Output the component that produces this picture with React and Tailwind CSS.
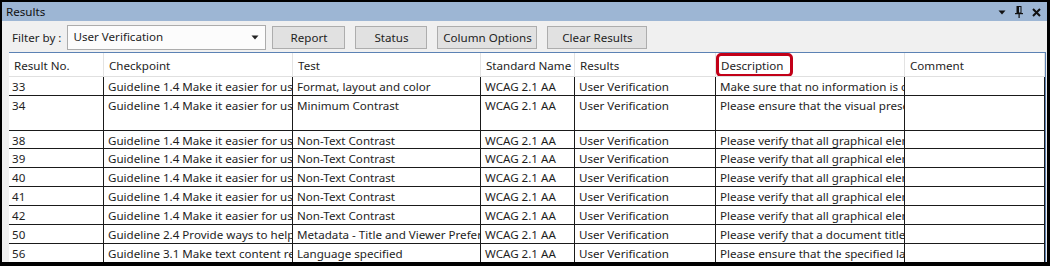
import React from "react";

const rows = [
  { n: "33", c: "Guideline 1.4 Make it easier for users to see and hear content", t: "Format, layout and color", d: "Make sure that no information is conveyed", h: "h-[19px]" },
  { n: "34", c: "Guideline 1.4 Make it easier for users to see and hear content", t: "Minimum Contrast", d: "Please ensure that the visual presentation", h: "h-[35px]" },
  { n: "38", c: "Guideline 1.4 Make it easier for users to see and hear content", t: "Non-Text Contrast", d: "Please verify that all graphical elements", h: "h-[18px]" },
  { n: "39", c: "Guideline 1.4 Make it easier for users to see and hear content", t: "Non-Text Contrast", d: "Please verify that all graphical elements", h: "h-[19px]" },
  { n: "40", c: "Guideline 1.4 Make it easier for users to see and hear content", t: "Non-Text Contrast", d: "Please verify that all graphical elements", h: "h-[19px]" },
  { n: "41", c: "Guideline 1.4 Make it easier for users to see and hear content", t: "Non-Text Contrast", d: "Please verify that all graphical elements", h: "h-[19px]" },
  { n: "42", c: "Guideline 1.4 Make it easier for users to see and hear content", t: "Non-Text Contrast", d: "Please verify that all graphical elements", h: "h-[19px]" },
  { n: "50", c: "Guideline 2.4 Provide ways to help users navigate", t: "Metadata - Title and Viewer Preferences", d: "Please verify that a document title is", h: "h-[19px]" },
  { n: "56", c: "Guideline 3.1 Make text content readable", t: "Language specified", d: "Please ensure that the specified language", h: "h-[19px]" },
];

const cols = "grid-cols-[95px_189px_188px_94px_141px_189px_140px]";

function Cell({ children, first }) {
  return (
    <div className={`border-r border-b border-[#1a1a1a] overflow-hidden whitespace-nowrap leading-[17px] pt-[1px] ${first ? "pl-[3px]" : "pl-[4px]"}`}>
      {children}
    </div>
  );
}

function HCell({ children, highlight }) {
  return (
    <div className="relative flex items-center border-r border-[#e3e3e3] overflow-hidden whitespace-nowrap pl-[5px] pt-[3px]">
      {children}
      {highlight && (
        <div className="absolute left-0 top-0 w-[77px] h-[24px] border-[3px] border-[#c20018] rounded-[5px]" />
      )}
    </div>
  );
}

function Btn({ w, children }) {
  return (
    <div className={`${w} h-[23px] flex items-center justify-center border border-[#adadad] bg-[#e1e1e1] text-[#1e1e1e]`}>
      {children}
    </div>
  );
}

export default function App() {
  return (
    <div
      className="w-[1050px] h-[266px] bg-black pt-[2px] pl-[2px] pr-[3px] pb-[4px] overflow-hidden text-[11.6px] text-[#1e1e1e]"
      style={{ fontFamily: "'Segoe UI','Noto Sans',sans-serif" }}
    >
      <div className="h-full bg-[#f0f0f0] flex flex-col">
        <div className="h-[19px] bg-[#9db6d4] flex items-center justify-between pl-[4px] pr-[6px] pt-[1px] shrink-0">
          <span className="text-[#111]">Results</span>
          <div className="flex items-center gap-[9px]">
            <svg width="8" height="6" viewBox="0 0 8 6"><polygon points="0.5,1.5 7.5,1.5 4,5.5" fill="#111" /></svg>
            <svg width="8" height="12" viewBox="0 0 8 12">
              <rect x="2" y="0.5" width="4" height="6.5" fill="none" stroke="#111" strokeWidth="1" />
              <rect x="2" y="0.5" width="2" height="6.5" fill="#111" />
              <rect x="0" y="7" width="8" height="1.2" fill="#111" />
              <rect x="3.5" y="8" width="1.2" height="4" fill="#111" />
            </svg>
            <svg width="9" height="9" viewBox="0 0 9 9"><path d="M1 1 L8 8 M8 1 L1 8" stroke="#111" strokeWidth="2" /></svg>
          </div>
        </div>
        <div className="h-[31px] flex items-center pl-[10px] pt-[2px] shrink-0">
          <span className="mr-[6px]">Filter by :</span>
          <div className="w-[199px] h-[25px] border border-[#acacac] bg-[#fcfcfc] flex items-center justify-between pl-[5px] pr-[6px] -mt-[1px]">
            <span>User Verification</span>
            <svg width="8" height="5" viewBox="0 0 8 5"><polygon points="0.5,0.5 7.5,0.5 4,4.5" fill="#222" /></svg>
          </div>
          <div className="flex items-center ml-[6px] gap-[9px]">
            <Btn w="w-[73px]">Report</Btn>
            <div className="ml-[1px]"><Btn w="w-[72px]">Status</Btn></div>
            <div className="ml-[1px]"><Btn w="w-[100px]">Column Options</Btn></div>
            <div className="ml-[1px]"><Btn w="w-[100px]">Clear Results</Btn></div>
          </div>
        </div>
        <div className="flex-1 pl-[7px] overflow-hidden">
          <div className="w-[1037px] bg-white border-t border-r border-[#5c82b4] h-full">
            <div className={`grid ${cols} h-[24px] border-b border-[#e0e0e0]`}>
              <HCell>Result No.</HCell>
              <HCell>Checkpoint</HCell>
              <HCell>Test</HCell>
              <HCell>Standard Name</HCell>
              <HCell>Results</HCell>
              <HCell highlight>Description</HCell>
              <HCell>Comment</HCell>
            </div>
            {rows.map((r) => (
              <div key={r.n} className={`grid ${cols} ${r.h}`}>
                <Cell first>{r.n}</Cell>
                <Cell>{r.c}</Cell>
                <Cell>{r.t}</Cell>
                <Cell>WCAG 2.1 AA</Cell>
                <Cell>User Verification</Cell>
                <Cell>{r.d}</Cell>
                <Cell></Cell>
              </div>
            ))}
          </div>
        </div>
      </div>
    </div>
  );
}
